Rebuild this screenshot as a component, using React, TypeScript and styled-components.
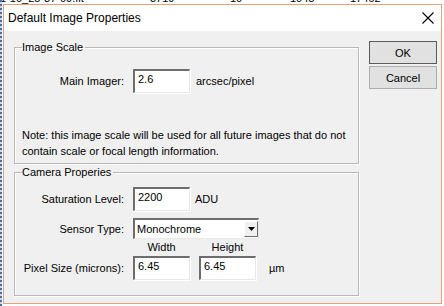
import React from "react";
import styled, { createGlobalStyle } from "styled-components";

const Global = createGlobalStyle`
  html, body { margin: 0; padding: 0; background: #ffffff; }
  body { width: 444px; height: 306px; overflow: hidden; font-family: "Liberation Sans", Arial, sans-serif; }
  #root { width: 444px; height: 306px; }
`;

const Page = styled.div`
  position: relative;
  width: 444px;
  height: 306px;
  background: #ffffff;
  overflow: hidden;
`;

const BgList = styled.div`
  height: 4px;
  overflow: hidden;
  display: flex;
  font-size: 11px;
  color: #000;
  white-space: nowrap;
`;

const BgCell = styled.span<{ $w: number }>`
  width: ${(p) => p.$w}px;
  flex: none;
  margin-top: -8px;
  line-height: 12px;
`;

const BgStrip = styled.div`
  position: absolute;
  left: 0;
  top: 0;
  width: 2px;
  height: 306px;
  background: repeating-linear-gradient(#4a6fb0 0 2px, #c9d6ee 2px 4px);
`;

const Dialog = styled.div`
  position: absolute;
  left: 3px;
  top: 4px;
  width: 437px;
  height: 298px;
  border: 1px solid #e1a47a;
  display: flex;
  flex-direction: column;
  background: #f0f0f0;
`;

const TitleBar = styled.div`
  height: 26px;
  flex: none;
  background: #ffffff;
  display: flex;
  align-items: center;
  justify-content: space-between;
  padding: 0 6px 0 4px;
  font-size: 12px;
  color: #000;
`;

const Close = styled.span`
  width: 14px;
  height: 14px;
  display: flex;
`;

const Body = styled.div`
  flex: 1;
  display: flex;
  padding: 10px 0 0 10px;
  gap: 10px;
`;

const Left = styled.div`
  width: 345px;
  display: flex;
  flex-direction: column;
  gap: 2px;
`;

const Group = styled.fieldset<{ $h: number }>`
  margin: 0;
  padding: 0;
  height: ${(p) => p.$h}px;
  box-sizing: border-box;
  border: 1px solid #b8b8b8;
  box-shadow: inset 1px 1px 0 #ffffff, 1px 1px 0 #ffffff;
  font-size: 11px;
  color: #000;
`;

const Legend = styled.legend`
  margin-left: 7px;
  padding: 0 2px 0 0;
  font-size: 11px;
  line-height: 13px;
`;

const Grid = styled.div<{ $top: number }>`
  display: grid;
  grid-template-columns: 109px 57px auto;
  column-gap: 9px;
  align-items: center;
  padding-top: ${(p) => p.$top}px;
`;

const Label = styled.span`
  justify-self: end;
  white-space: nowrap;
`;

const Unit = styled.span<{ $ml?: number }>`
  margin-left: ${(p) => p.$ml ?? -3}px;
  white-space: nowrap;
`;

const TextBox = styled.div<{ $w?: number; $h?: number }>`
  width: ${(p) => p.$w ?? 57}px;
  height: ${(p) => p.$h ?? 24}px;
  box-sizing: border-box;
  background: #fff;
  border-style: solid;
  border-width: 2px 1px 1px 2px;
  border-color: #6d6d6d #e8e8e8 #e8e8e8 #6d6d6d;
  box-shadow: 1px 1px 0 #fff;
  padding: 2px 0 0 3px;
  font-size: 11px;
  line-height: 13px;
`;

const Note = styled.div`
  padding: 34px 0 0 7px;
  line-height: 16px;
  white-space: nowrap;
`;

const SelectBox = styled.div`
  grid-column: 2 / span 2;
  width: 126px;
  height: 21px;
  box-sizing: border-box;
  background: #fff;
  border-style: solid;
  border-width: 2px 1px 1px 2px;
  border-color: #6d6d6d #e8e8e8 #e8e8e8 #6d6d6d;
  display: flex;
  align-items: center;
  justify-content: space-between;
  padding-left: 2px;
`;

const DropBtn = styled.div`
  width: 14px;
  height: 16px;
  box-sizing: border-box;
  background: #f0f0f0;
  border-style: solid;
  border-width: 1px;
  border-color: #fff #6d6d6d #6d6d6d #fff;
  display: flex;
  align-items: center;
  justify-content: center;
`;

const Pixel = styled.div`
  display: grid;
  grid-template-columns: 109px 57px 57px auto;
  column-gap: 9px;
  row-gap: 2px;
  align-items: center;
  margin-top: 2px;
`;

const ColHead = styled.span`
  justify-self: center;
  line-height: 13px;
`;

const Right = styled.div`
  display: flex;
  flex-direction: column;
  gap: 2px;
  padding-top: 0px;
`;

const Button = styled.div<{ $def?: boolean }>`
  width: 68px;
  height: 23px;
  box-sizing: border-box;
  background: #e1e1e1;
  border: 1px solid ${(p) => (p.$def ? "#5a5a5a" : "#adadad")};
  display: flex;
  align-items: center;
  justify-content: center;
  font-size: 11px;
  color: #000;
`;

export default function App() {
  return (
    <Page>
      <Global />
      <BgList>
        <BgCell $w={150}>1-10_25-37-09.fit</BgCell>
        <BgCell $w={80}>3719</BgCell>
        <BgCell $w={60}>10</BgCell>
        <BgCell $w={60}>1048</BgCell>
        <BgCell $w={60}>17462</BgCell>
      </BgList>
      <BgStrip />
      <Dialog>
        <TitleBar>
          <span>Default Image Properties</span>
          <Close>
            <svg width="14" height="14" viewBox="0 0 14 14">
              <path d="M1.5 1.5 L12.5 12.5 M12.5 1.5 L1.5 12.5" stroke="#000" strokeWidth="1.1" />
            </svg>
          </Close>
        </TitleBar>
        <Body>
          <Left>
            <Group $h={123}>
              <Legend>Image Scale</Legend>
              <Grid $top={15}>
                <Label>Main Imager:</Label>
                <TextBox>2.6</TextBox>
                <Unit $ml={-3}>arcsec/pixel</Unit>
              </Grid>
              <Note>
                Note: this image scale will be used for all future images that do not
                <br />
                contain scale or focal length information.
              </Note>
            </Group>
            <Group $h={130}>
              <Legend>Camera Properies</Legend>
              <Grid $top={8}>
                <Label>Saturation Level:</Label>
                <TextBox>2200</TextBox>
                <Unit $ml={-4}>ADU</Unit>
              </Grid>
              <Grid $top={7}>
                <Label>Sensor Type:</Label>
                <SelectBox>
                  <span>Monochrome</span>
                  <DropBtn>
                    <svg width="7" height="4" viewBox="0 0 7 4">
                      <path d="M0 0 H7 L3.5 4 Z" fill="#000" />
                    </svg>
                  </DropBtn>
                </SelectBox>
              </Grid>
              <Pixel>
                <span />
                <ColHead>Width</ColHead>
                <ColHead>Height</ColHead>
                <span />
                <Label>Pixel Size (microns):</Label>
                <TextBox>6.45</TextBox>
                <TextBox>6.45</TextBox>
                <Unit $ml={4}>µm</Unit>
              </Pixel>
            </Group>
          </Left>
          <Right>
            <Button $def>OK</Button>
            <Button>Cancel</Button>
          </Right>
        </Body>
      </Dialog>
    </Page>
  );
}
